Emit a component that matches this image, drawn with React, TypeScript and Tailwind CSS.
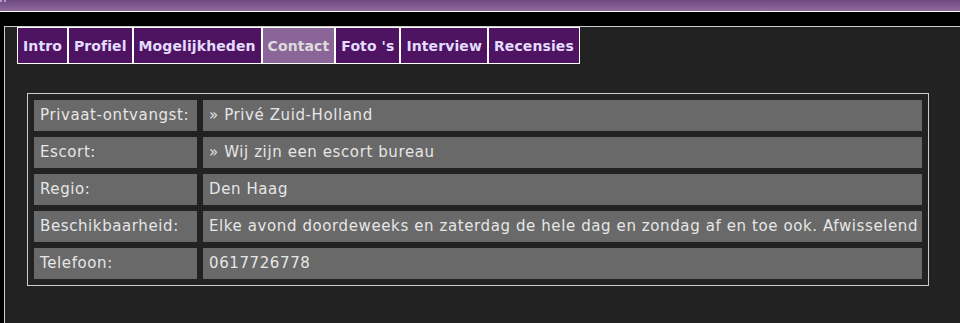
import React from "react";

const tabs = ["Intro", "Profiel", "Mogelijkheden", "Contact", "Foto 's", "Interview", "Recensies"];
const rows: [string, string][] = [
  ["Privaat-ontvangst:", "» Privé Zuid-Holland"],
  ["Escort:", "» Wij zijn een escort bureau"],
  ["Regio:", "Den Haag"],
  ["Beschikbaarheid:", "Elke avond doordeweeks en zaterdag de hele dag en zondag af en toe ook. Afwisselend"],
  ["Telefoon:", "0617726778"],
];

export default function App() {
  return (
    <div className="w-[960px] h-[323px] overflow-hidden bg-black flex flex-col" style={{ fontFamily: "'DejaVu Sans', Verdana, sans-serif" }}>
      <div className="h-[11px] bg-gradient-to-b from-[#6f4a82] to-[#8e6a9c] relative">
        <div className="absolute left-0 top-0 flex gap-[2px]">
          <span className="w-[2px] h-[2px] bg-[#b0a0d0]" />
          <span className="w-[2px] h-[2px] bg-[#b0a0d0]" />
        </div>
      </div>
      <div className="h-px bg-white" />
      <div className="h-[14px] bg-black" />
      <div className="flex-1 flex">
        <div className="w-[4px] bg-black" />
        <div className="flex-1 bg-[#222222] border-t border-l border-[#cccccc] pl-[12px] flex flex-col">
          <div className="flex">
            {tabs.map((t) => (
              <div
                key={t}
                className={`h-[37px] border border-white px-[5px] pt-[2px] flex items-center text-[14px] font-bold tracking-[0.1px] ${
                  t === "Contact" ? "bg-[#8a6698] text-[#dcdcdc]" : "bg-[#4e1461] text-[#e4dcff]"
                }`}
              >
                {t}
              </div>
            ))}
          </div>
          <div className="mt-[29px] ml-[10px] w-[902px] border border-[#cccccc] p-[6px] flex flex-col gap-[6px]">
            {rows.map(([k, v]) => (
              <div key={k} className="flex gap-[6px] h-[31px]">
                <div className="w-[163px] bg-[#696969] text-[#e6e6e6] text-[15px] tracking-[0.6px] px-[6px] flex items-center whitespace-nowrap">{k}</div>
                <div className="flex-1 bg-[#696969] text-[#e6e6e6] text-[15px] tracking-[0.6px] px-[6px] flex items-center whitespace-nowrap overflow-hidden">{v}</div>
              </div>
            ))}
          </div>
        </div>
      </div>
    </div>
  );
}
